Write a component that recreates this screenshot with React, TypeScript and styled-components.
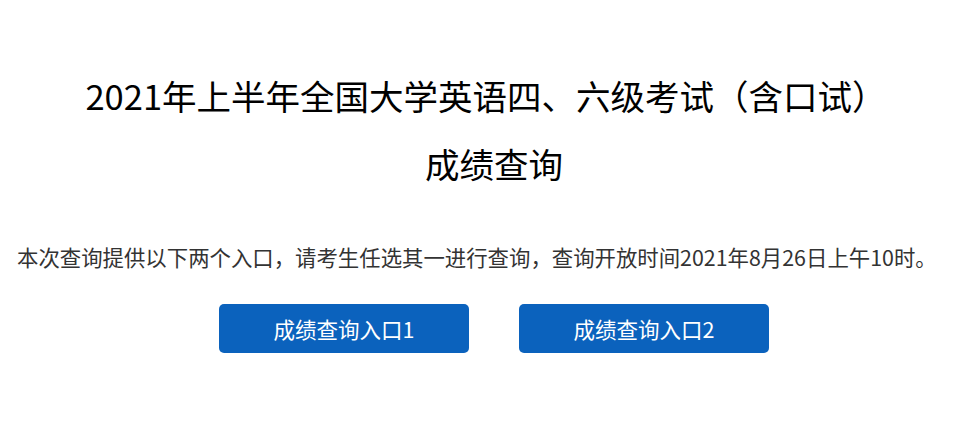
import React from "react";
import styled, { createGlobalStyle } from "styled-components";

const Global = createGlobalStyle`
  html, body { margin: 0; padding: 0; background: #ffffff; }
  body { font-family: "Noto Sans CJK SC", "Noto Sans", sans-serif; text-spacing-trim: space-all; }
`;

const Page = styled.main`
  box-sizing: border-box;
  width: 965px;
  padding: 61px 0 0 17px;
  display: flex;
  flex-direction: column;
`;

const Title = styled.h1`
  margin: 0;
  font-size: 34.5px;
  font-weight: 400;
  line-height: 68px;
  color: #000;
  text-align: center;
`;

const TitleLine = styled.span<{ $shift: number }>`
  display: block;
  padding-left: ${(p) => (p.$shift > 0 ? p.$shift : 0)}px;
  padding-right: ${(p) => (p.$shift < 0 ? -p.$shift : 0)}px;
`;

const Notice = styled.p`
  margin: 45px 0 0 0;
  font-size: 21.4px;
  line-height: 30px;
  color: #333;
  white-space: nowrap;
`;

const Buttons = styled.div`
  display: flex;
  justify-content: center;
  gap: 50px;
  margin: 32px 0 0 6px;
`;

const EntryButton = styled.a`
  display: flex;
  align-items: center;
  justify-content: center;
  width: 250px;
  height: 49px;
  border-radius: 5px;
  background: #0b62bd;
  color: #fff;
  font-size: 21.5px;
  text-decoration: none;
`;

export default function App() {
  return (
    <>
      <Global />
      <Page>
        <Title>
          <TitleLine $shift={-10}>
            2021年上半年全国大学英语四、六级考试（含口试）
          </TitleLine>
          <TitleLine $shift={6}>成绩查询</TitleLine>
        </Title>
        <Notice>
          本次查询提供以下两个入口，请考生任选其一进行查询，查询开放时间2021年8月26日上午10时。
        </Notice>
        <Buttons>
          <EntryButton href="#">成绩查询入口1</EntryButton>
          <EntryButton href="#">成绩查询入口2</EntryButton>
        </Buttons>
      </Page>
    </>
  );
}
